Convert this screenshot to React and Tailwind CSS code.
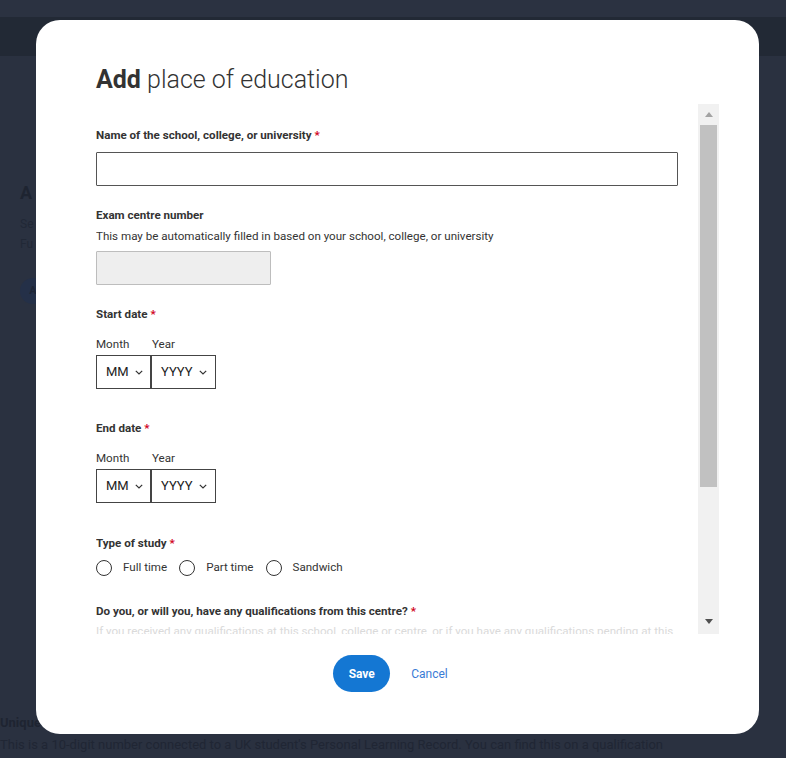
import React from "react";

const Req = () => <span className="text-[#d0021b] ml-[3px]">*</span>;

const Chevron = () => (
  <svg width="8" height="5" viewBox="0 0 8 5" className="ml-[6px]">
    <polyline points="0.8,0.8 4,4 7.2,0.8" fill="none" stroke="#333" strokeWidth="1.2" />
  </svg>
);

function DateField({ label, mt }) {
  return (
    <div>
      <div className={`${mt} h-[18px] leading-[18px] font-bold text-[11.6px] text-[#333]`}>
        {label}
        <Req />
      </div>
      <div className="mt-[12px] flex h-[18px] leading-[18px] text-[11.6px] text-[#333]">
        <span className="w-[56px]">Month</span>
        <span>Year</span>
      </div>
      <div className="mt-[2px] flex">
        <div className="w-[55px] h-[34px] border border-[#444] flex items-center pl-[9px] text-[13px] text-[#222]">
          MM
          <Chevron />
        </div>
        <div className="w-[65px] h-[34px] border border-[#444] flex items-center pl-[9px] text-[13px] text-[#222]">
          YYYY
          <Chevron />
        </div>
      </div>
    </div>
  );
}

function Radio({ label }) {
  return (
    <div className="flex items-center">
      <span className="w-[16px] h-[16px] rounded-full border border-[#333] bg-white" />
      <span className="ml-[11px] text-[11.6px] text-[#333]">{label}</span>
    </div>
  );
}

export default function App() {
  return (
    <div
      className="relative w-[786px] h-[758px] overflow-hidden bg-[#2a3140]"
      style={{ fontFamily: "Roboto, 'Liberation Sans', sans-serif" }}
    >
      {/* underlying page */}
      <div className="h-[17px] bg-[#2b3241]" />
      <div className="h-[39px] bg-[#222935]" />
      <div className="pl-[20px] pt-[126px] text-[#212836]">
        <div className="text-[18px] font-bold leading-[22px] text-[#1e2431]">A</div>
        <div className="mt-[12px] text-[12px] leading-[16px]">Se</div>
        <div className="mt-[4px] text-[12px] leading-[16px]">Fu</div>
        <div className="mt-[26px] w-[26px] h-[26px] rounded-full bg-[#243048] flex items-center justify-center text-[11px] font-bold text-[#1e2636]">
          A
        </div>
      </div>
      <div className="absolute left-0 top-[714px] text-[#1e2431] w-[786px]">
        <div className="text-[13px] font-bold leading-[18px]">Unique</div>
        <div className="mt-[4px] text-[13px] leading-[18px] whitespace-nowrap text-[#202634]">
          This is a 10-digit number connected to a UK student's Personal Learning Record. You can find this on a qualification
        </div>
      </div>

      {/* modal */}
      <div className="absolute left-[36px] top-[20px] w-[723px] h-[714px] rounded-[24px] bg-white flex flex-col">
        <h1 className="mt-[45px] ml-[60px] h-[30px] leading-[30px] text-[25px] text-[#333] font-light">
          <span className="font-bold">Add</span> place of education
        </h1>

        <div className="mt-[9px] ml-[60px] h-[530px] flex">
          <div className="w-[602px] h-full overflow-hidden pr-[20px]">
            <div className="pt-[22px] h-[18px] box-content leading-[18px] font-bold text-[11.6px] text-[#333]">
              Name of the school, college, or university
              <Req />
            </div>
            <div className="mt-[8px] h-[34px] border border-[#555] rounded-[1px]" />

            <div className="mt-[20px] h-[18px] leading-[18px] font-bold text-[11.6px] text-[#333]">
              Exam centre number
            </div>
            <div className="mt-[3px] h-[18px] leading-[18px] text-[11.6px] text-[#333]">
              This may be automatically filled in based on your school, college, or university
            </div>
            <div className="mt-[6px] w-[175px] h-[34px] border border-[#bdbdbd] bg-[#eeeeee] rounded-[1px]" />

            <DateField label="Start date" mt="mt-[20px]" />
            <DateField label="End date" mt="mt-[30px]" />

            <div className="mt-[31px] h-[18px] leading-[18px] font-bold text-[11.6px] text-[#333]">
              Type of study
              <Req />
            </div>
            <div className="mt-[7px] h-[18px] flex items-center gap-[12px]">
              <Radio label="Full time" />
              <Radio label="Part time" />
              <Radio label="Sandwich" />
            </div>

            <div className="mt-[25px] h-[18px] leading-[18px] font-bold text-[11.6px] text-[#333]">
              Do you, or will you, have any qualifications from this centre?
              <Req />
            </div>
            <div className="mt-[2px] leading-[18px] text-[11.6px] text-[#dadada] whitespace-nowrap">
              If you received any qualifications at this school, college or centre, or if you have any qualifications pending at this
            </div>
          </div>

          {/* scrollbar */}
          <div className="w-[21px] h-full bg-[#f1f1f1] flex flex-col">
            <div className="h-[21px] flex items-center justify-center">
              <svg width="8" height="5" viewBox="0 0 8 5">
                <polygon points="4,0 8,5 0,5" fill="#a3a3a3" />
              </svg>
            </div>
            <div className="mx-[2px] h-[362px] bg-[#c1c1c1]" />
            <div className="flex-1" />
            <div className="h-[21px] flex items-start justify-center pt-[6px]">
              <svg width="8" height="5" viewBox="0 0 8 5">
                <polygon points="0,0 8,0 4,5" fill="#505050" />
              </svg>
            </div>
          </div>
        </div>

        <div className="mt-[21px] flex items-center justify-center pr-[14px]">
          <button className="w-[57px] h-[37px] rounded-full bg-[#1477d3] text-white font-bold text-[12px]">
            Save
          </button>
          <button className="ml-[21px] text-[#3a7bd5] text-[12px]">Cancel</button>
        </div>
      </div>
    </div>
  );
}
